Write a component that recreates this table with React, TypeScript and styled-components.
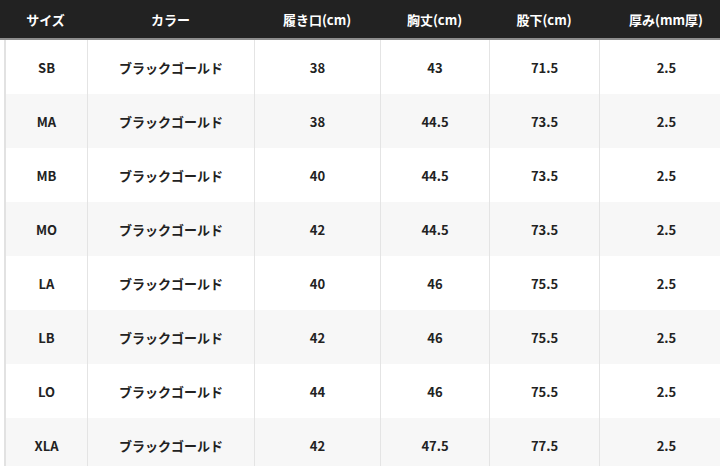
import React from "react";
import styled, { createGlobalStyle } from "styled-components";

const Global = createGlobalStyle`
  html, body { margin: 0; padding: 0; background: #fff; }
  body { font-family: "Noto Sans CJK JP", "Noto Sans", sans-serif; overflow: hidden; }
`;

const COLS = "83px 167px 126px 109px 110px 134px";

const Wrap = styled.div`
  width: 720px;
  height: 466px;
  overflow: hidden;
`;

const Head = styled.div`
  display: grid;
  grid-template-columns: ${COLS};
  padding-left: 4px;
  height: 38px;
  background: #222222;
  border-bottom: 2px solid #8d8d8d;
  width: max-content;
  min-width: 716px;
`;

const HeadCell = styled.div`
  display: flex;
  align-items: center;
  justify-content: center;
  color: #ffffff;
  font-size: 13px;
  font-weight: 700;
  white-space: nowrap;
`;

const Body = styled.div`
  margin-left: 4px;
  border-left: 2px solid #e2e2e2;
  width: max-content;
`;

const Row = styled.div<{ $alt: boolean }>`
  display: grid;
  grid-template-columns: 81px 167px 126px 109px 110px 134px;
  height: 54px;
  background: ${(p) => (p.$alt ? "#f7f7f7" : "#ffffff")};
`;

const Cell = styled.div<{ $first?: boolean }>`
  display: flex;
  align-items: center;
  justify-content: center;
  color: #222222;
  font-size: 13px;
  font-weight: 700;
  white-space: nowrap;
  border-left: ${(p) => (p.$first ? "none" : "1px solid #e4e4e4")};
`;

const headers = ["サイズ", "カラー", "履き口(cm)", "胸丈(cm)", "股下(cm)", "厚み(mm厚)"];

const rows: string[][] = [
  ["SB", "ブラックゴールド", "38", "43", "71.5", "2.5"],
  ["MA", "ブラックゴールド", "38", "44.5", "73.5", "2.5"],
  ["MB", "ブラックゴールド", "40", "44.5", "73.5", "2.5"],
  ["MO", "ブラックゴールド", "42", "44.5", "73.5", "2.5"],
  ["LA", "ブラックゴールド", "40", "46", "75.5", "2.5"],
  ["LB", "ブラックゴールド", "42", "46", "75.5", "2.5"],
  ["LO", "ブラックゴールド", "44", "46", "75.5", "2.5"],
  ["XLA", "ブラックゴールド", "42", "47.5", "77.5", "2.5"],
];

export default function App() {
  return (
    <Wrap>
      <Global />
      <Head>
        {headers.map((h) => (
          <HeadCell key={h}>{h}</HeadCell>
        ))}
      </Head>
      <Body>
        {rows.map((r, i) => (
          <Row key={r[0]} $alt={i % 2 === 1}>
            {r.map((c, j) => (
              <Cell key={j} $first={j === 0}>
                {c}
              </Cell>
            ))}
          </Row>
        ))}
      </Body>
    </Wrap>
  );
}
